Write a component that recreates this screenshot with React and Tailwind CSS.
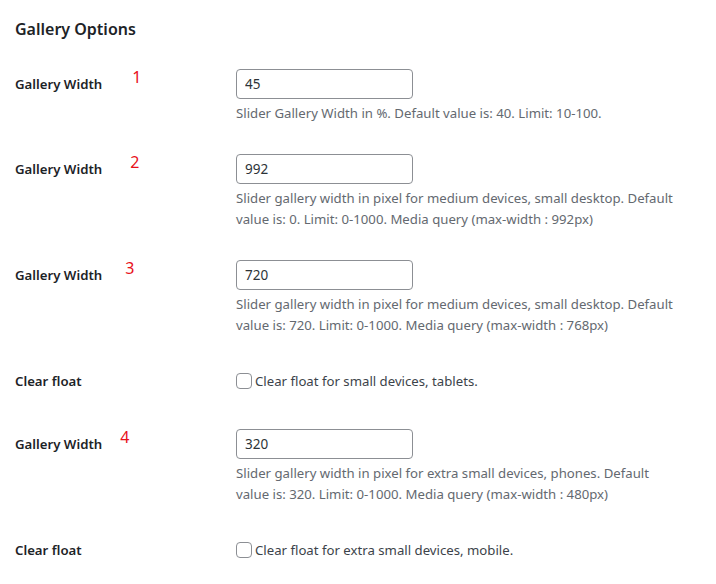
export default function App() {
  const rows = [
    {
      type: "input",
      label: "Gallery Width",
      num: "1",
      numGap: "ml-[30px]",
      value: "45",
      desc: "Slider Gallery Width in %. Default value is: 40. Limit: 10-100.",
    },
    {
      type: "input",
      label: "Gallery Width",
      num: "2",
      numGap: "ml-[28px]",
      value: "992",
      desc: "Slider gallery width in pixel for medium devices, small desktop. Default value is: 0. Limit: 0-1000. Media query (max-width : 992px)",
    },
    {
      type: "input",
      label: "Gallery Width",
      num: "3",
      numGap: "ml-[23px]",
      value: "720",
      desc: "Slider gallery width in pixel for medium devices, small desktop. Default value is: 720. Limit: 0-1000. Media query (max-width : 768px)",
    },
    { type: "check", label: "Clear float", text: "Clear float for small devices, tablets." },
    {
      type: "input",
      label: "Gallery Width",
      num: "4",
      numGap: "ml-[18px]",
      value: "320",
      desc: "Slider gallery width in pixel for extra small devices, phones. Default value is: 320. Limit: 0-1000. Media query (max-width : 480px)",
    },
    { type: "check", label: "Clear float", text: "Clear float for extra small devices, mobile." },
  ];

  return (
    <div
      className="min-h-[584px] bg-white pl-[15px] text-[13.2px] text-[#3c434a]"
      style={{ fontFamily: '"Noto Sans", "Open Sans", sans-serif' }}
    >
      <h2 className="pt-[18px] text-[16px] leading-[22px] font-semibold text-[#1d2327]">
        Gallery Options
      </h2>
      <div className="mt-[14px]">
        {rows.map((row, i) => (
          <div key={i} className="flex">
            {/* label column */}
            <div
              className={`w-[221px] shrink-0 pb-[20px] leading-[18px] font-semibold text-[#1d2327] ${
                row.type === "input" ? "pt-[20px]" : "pt-[21px]"
              }`}
            >
              {row.label}
              {row.num && (
                <span className={`${row.numGap} relative -top-[6px] text-[16px] font-normal text-[#e8101a]`}>
                  {row.num}
                </span>
              )}
            </div>
            <div className="w-[446px] pt-[15px] pb-[15px]">
              {row.type === "input" ? (
                <>
                  <input
                    type="text"
                    defaultValue={row.value}
                    className="h-[30px] w-[177px] rounded-[4px] border border-[#8c8f94] px-[8px] text-[13.5px] text-[#2c3338] outline-none"
                  />
                  <p className="mt-[4px] leading-[21px] text-[#646970]">{row.desc}</p>
                </>
              ) : (
                <label className="flex h-[33px] items-start pt-[7px] leading-[17px]">
                  <span className="mr-[3px] h-[16px] w-[16px] shrink-0 rounded-[4px] border border-[#8c8f94] bg-white" />
                  {row.text}
                </label>
              )}
            </div>
          </div>
        ))}
      </div>
    </div>
  );
}
